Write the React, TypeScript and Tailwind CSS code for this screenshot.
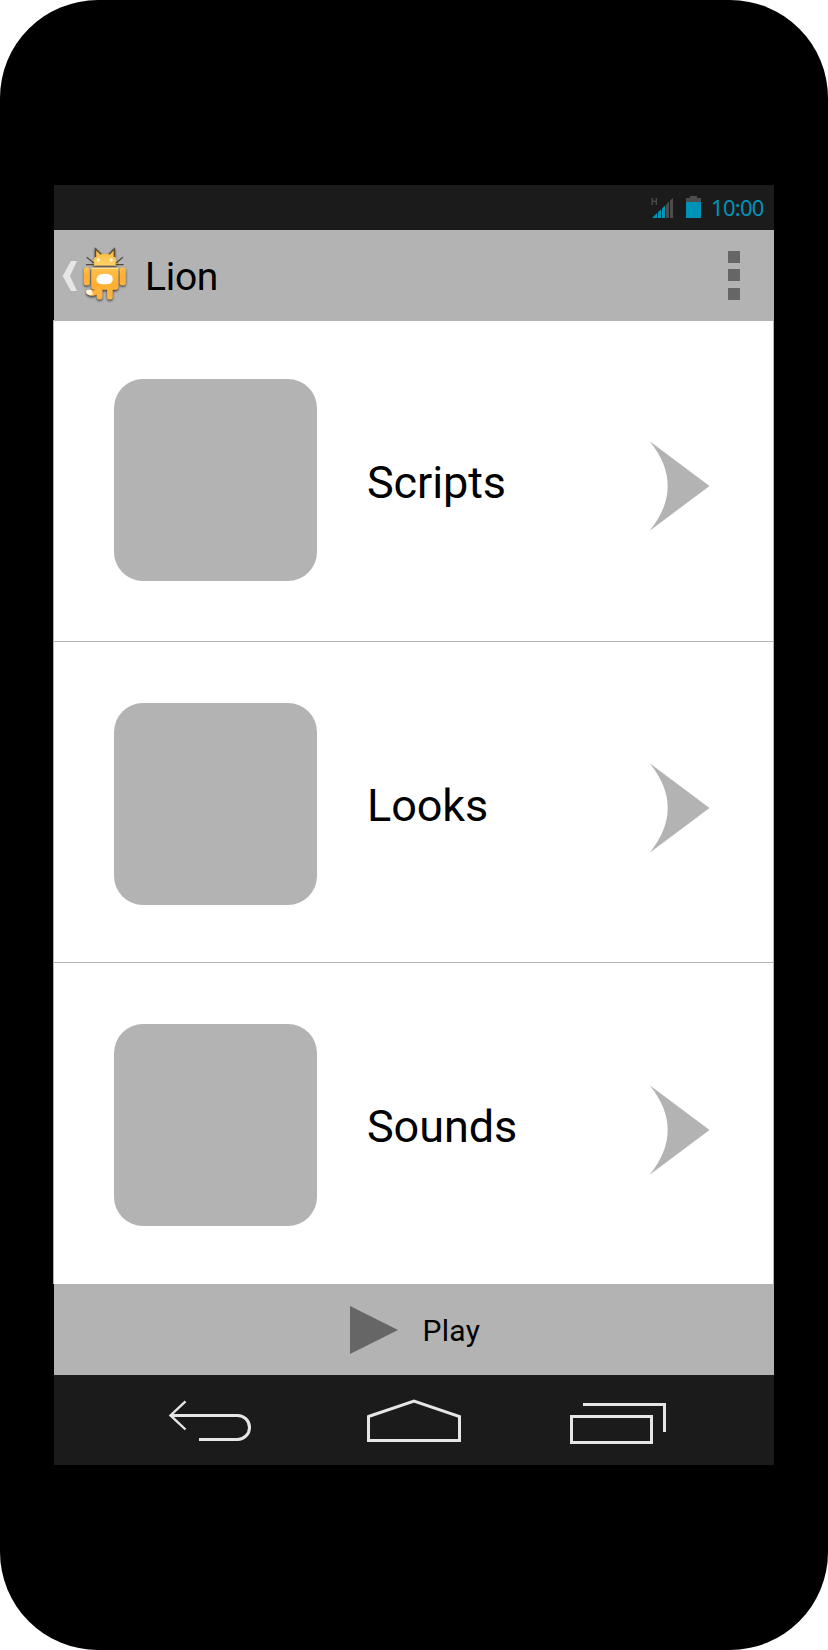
import React from "react";

type Row = { label: string; tile: string; text: string; row: string; arrow: string };

const rows: Row[] = [
  { label: "Scripts", row: "h-[321px]", tile: "mt-[58px]", text: "mt-[134px]", arrow: "mt-[120px]" },
  { label: "Looks", row: "h-[321px]", tile: "mt-[61px]", text: "mt-[136px]", arrow: "mt-[121px]" },
  { label: "Sounds", row: "h-[321px]", tile: "mt-[61px]", text: "mt-[136px]", arrow: "mt-[122px]" },
];

function Signal() {
  return (
    <svg className="mt-[12px] h-[22px] w-[23px] shrink-0" viewBox="0 0 23 22">
      <path d="M1.200 1v7M5.300 1v7M1.200 4.300h4" stroke="#4d4d4d" strokeWidth="1.300" fill="none" />
      <path d="M1 21L6 16V21ZM7 21V15L10 12.500V21ZM11 21V11.500L14 8.500V21Z" fill="#0093b8" />
      <path d="M15 21V7.500L18 4.500V21ZM19 21V3.500L22 1V21Z" fill="#4d4d4d" />
    </svg>
  );
}

function Battery() {
  return (
    <svg className="ml-3 mt-[11px] h-[22px] w-[15px] shrink-0" viewBox="0 0 15 22">
      <path d="M0 2H4V0H11V2H15V6H0Z" fill="#4d4d4d" />
      <path d="M0 6H15V22H0Z" fill="#0093b8" />
    </svg>
  );
}

function CatRobot() {
  return (
    <svg className="mt-[17px] h-[56px] w-[46px] shrink-0 overflow-visible" viewBox="-0.6 0 46 56">
      <defs>
        <linearGradient id="head" x1="0" y1="0" x2="0" y2="1">
          <stop offset="0" stopColor="#f6b73b" />
          <stop offset="1" stopColor="#ffd36a" />
        </linearGradient>
        <linearGradient id="body" x1="0" y1="0" x2="0" y2="1">
          <stop offset="0" stopColor="#ffc24e" />
          <stop offset=".5" stopColor="#ffae31" />
          <stop offset="1" stopColor="#ffb541" />
        </linearGradient>
        <filter id="shade" x="-20%" y="-20%" width="140%" height="150%">
          <feDropShadow dx="0" dy="1.300" stdDeviation="1.300" floodColor="#222" floodOpacity=".95" />
        </filter>
      </defs>
      <g filter="url(#shade)">
        <path d="M10.300 18.600C10.300 14 11.800 11 13 9.500L12.800 2L18.500 7.300Q23 6 26.500 7.300L31.700 2L32 9.500C33.500 12 34.500 15 34.500 18.600Z" fill="url(#head)" />
        <path d="M13 10L12.900 1.800L18.500 7.300M26.500 7.300L31.700 1.800L31.700 10" stroke="#5c4a30" strokeWidth="1.300" fill="none" />
        <rect x="1.200" y="20.300" width="5.900" height="18" rx="2.900" fill="url(#body)" />
        <rect x="37.200" y="20.300" width="5.900" height="18" rx="2.900" fill="url(#body)" />
        <path d="M8.800 20.700H35.700V40Q35.700 42.800 33 42.800H30V50Q30 52.500 27.300 52.500Q24.500 52.500 24.500 50V42.800H19.700V50Q19.700 52.500 17 52.500Q14.200 52.500 14.200 50V47.500Q9 50 5 47.500Q2.200 45 4 43.500Q7 42 11 43.800L12.500 42.800Q8.800 42.800 8.800 40Z" fill="url(#body)" />
      </g>
      <path d="M9 21.400H35.500" stroke="#ffe1a0" strokeWidth="1" />
      <path d="M4.200 43.300Q7.500 42.200 9.500 43.600L10 47.700Q6.500 48.800 4.200 46.500Q2.800 44.500 4.200 43.300Z" fill="#fff7e8" />
      <path d="M20 27Q22.300 26.600 24.500 27C32.500 27.300 31 36.500 26.500 37Q22.300 37.600 18 37C12 36.500 12.500 27.300 20 27Z" fill="#fff" />
      <circle cx="15.800" cy="13" r="1.700" fill="#fff3d5" />
      <circle cx="28.700" cy="13" r="1.700" fill="#fff3d5" />
      <path d="M4.100 10.300L11.500 16.300M3.300 17.600H11.500M40.300 10.300L33 16.300M41 17.600H33" stroke="#54483a" strokeWidth="1.200" />
    </svg>
  );
}

function Item({ label, row, tile, text, arrow }: Row) {
  return (
    <div className={"flex items-start border-b border-[#b3b3b3] last:border-b-0 " + row}>
      <div className={"ml-[60px] h-[202px] w-[203px] shrink-0 rounded-[29px] bg-[#b3b3b3] " + tile} />
      <span className={"ml-[50px] w-[282px] whitespace-nowrap text-[45px] leading-[56px] tracking-[-0.1px] " + text}>{label}</span>
      <svg className={"h-[90px] w-[61px] shrink-0 " + arrow} viewBox="0 0 61 90">
        <path d="M.7 .3L60.500 45L.7 89.700Q36.700 45 .7 .3Z" fill="#b3b3b3" />
      </svg>
    </div>
  );
}

export default function App() {
  return (
    <div className="h-[1650px] w-[828px] bg-white">
      <div className="flex h-full w-full flex-col items-center rounded-[98px] bg-black pt-[185px] font-['Roboto',sans-serif] text-black">
        <div className="flex h-[45px] w-[720px] items-start bg-[#1b1b1b] pl-[597px]">
          <Signal />
          <Battery />
          <span className="ml-[10px] mt-[7px] font-['Noto_Sans',sans-serif] text-[22px] leading-[30px] tracking-[-0.7px] text-[#0093b8]">10:00</span>
        </div>
        <header className="flex h-[90px] w-[720px] items-start bg-[#b3b3b3]">
          <svg className="ml-[8px] mt-[30px] h-[32px] w-[17px] shrink-0" viewBox="0 0 17 32">
            <path d="M.7 16L9 1H15L8 16L15 31H9Z" fill="#e6e6e6" />
          </svg>
          <div className="ml-[3px] flex">
            <CatRobot />
          </div>
          <h1 className="ml-[17px] mt-[22px] text-[39px] leading-[50px] tracking-[-0.3px]">Lion</h1>
          <svg className="ml-auto mr-[34px] mt-[21px] h-[49px] w-[12px]" viewBox="0 0 12 49">
            <path d="M0 0H12V12H0ZM0 18H12V30H0ZM0 37H12V49H0Z" fill="#666" />
          </svg>
        </header>
        <main className="-ml-px h-[964px] w-[721px] border-x border-t border-[#b3b3b3] bg-white">
          {rows.map((r) => (
            <Item key={r.label} {...r} />
          ))}
        </main>
        <div className="flex h-[91px] w-[720px] items-start bg-[#b3b3b3] pl-[296px]">
          <svg className="mt-[21px] h-[50px] w-[49px]" viewBox="0 0 49 50">
            <path d="M0 1L48 25L0 49Z" fill="#666" />
          </svg>
          <span className="ml-[23.500px] mt-[27px] text-[30px] leading-[40px] tracking-[0.3px]">Play</span>
        </div>
        <nav className="flex h-[90px] w-[720px] items-start bg-[#1b1b1b] pl-[114px]">
          <svg className="mt-[25px] h-[43px] w-[84px]" viewBox="0 0 84 43" fill="none" stroke="#e6e6e6">
            <path d="M3 15.400H69.500A12 12 0 0 1 69.500 39.400H31" strokeWidth="3" />
            <path d="M17.500 1.300L2.500 15.400L17.500 29.500" strokeWidth="2.400" />
          </svg>
          <svg className="ml-[115px] mt-[22px] h-[46px] w-[96px]" viewBox="0 0 96 46" fill="none" stroke="#e6e6e6" strokeWidth="3">
            <path d="M1.500 19.500L47 4L92.500 19.500V43.500H1.500Z" />
          </svg>
          <svg className="ml-[107px] mt-[27px] h-[44px] w-[98px]" viewBox="0 0 98 44" fill="none" stroke="#e6e6e6" strokeWidth="3">
            <path d="M1.500 14.500H81.500V40.500H1.500ZM13 2.500H94.500V30" />
          </svg>
        </nav>
      </div>
    </div>
  );
}
